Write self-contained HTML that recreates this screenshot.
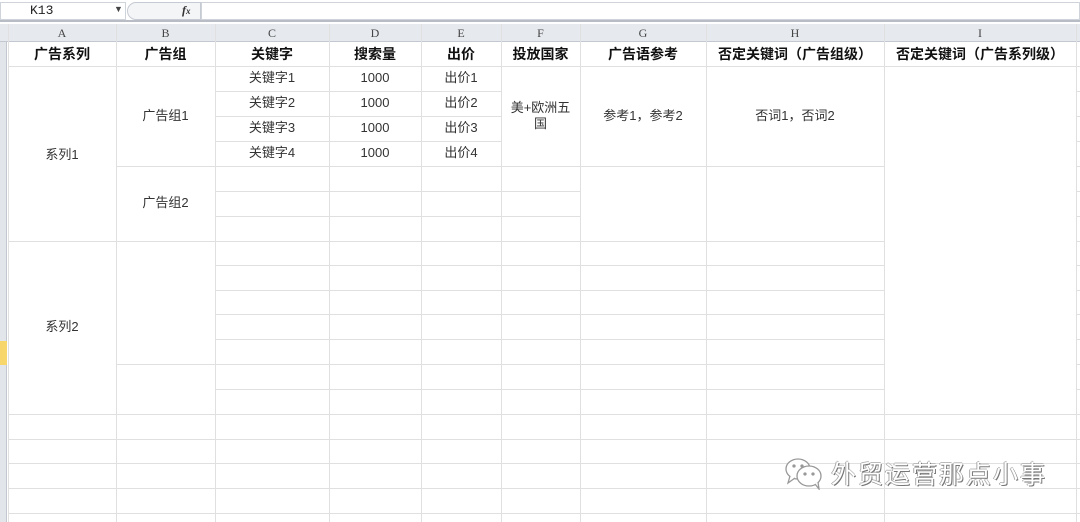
<!DOCTYPE html>
<html><head><meta charset="utf-8"><style>
body{margin:0;width:1080px;height:522px;overflow:hidden;background:#fff;position:relative;font-family:"Liberation Sans","Noto Sans CJK SC",sans-serif;}
div{position:absolute;box-sizing:border-box;}
.t{font-size:13px;color:#333;text-align:center;white-space:nowrap;line-height:16px;}
.b{font-weight:bold;font-size:14px;color:#111;}
.ch{top:25px;height:17px;font-family:"Liberation Serif",serif;font-size:12px;color:#444;text-align:center;line-height:17px;}
</style></head><body>
<div style="left:0;top:0;width:1080px;height:22px;background:#fff;border-bottom:2px solid #b8bcc4;"></div>
<div style="left:0;top:2px;width:126px;height:18px;border:1px solid #cfd3da;background:#fff;"></div>
<div style="left:30px;top:3px;font-family:'Liberation Mono',monospace;font-size:13px;color:#222;">K13</div>
<div style="left:114px;top:4px;font-size:9px;color:#444;">▼</div>
<div style="left:127px;top:2px;width:74px;height:18px;border:1px solid #c6cad2;border-radius:9px 0 0 9px;background:#f4f5f7;"></div>
<div style="left:182px;top:3px;font-family:'Liberation Serif',serif;font-style:italic;font-weight:bold;font-size:12px;color:#333;">f<span style="font-size:9px">x</span></div>
<div style="left:201px;top:2px;width:879px;height:18px;border:1px solid #cfd3da;background:#fff;"></div>
<div style="left:0;top:24px;width:1080px;height:18px;background:#e6e9ee;border-bottom:1px solid #c3c7cf;"></div>
<div style="left:0;top:42px;width:7px;height:480px;background:#e2e5ea;border-right:1px solid #c3c7cf;"></div>
<div style="left:0;top:341px;width:7px;height:24px;background:#f7d66c;"></div>
<div id="g"></div>
<div class="ch" style="left:8px;width:108px">A</div>
<div class="ch" style="left:116px;width:99px">B</div>
<div class="ch" style="left:215px;width:114px">C</div>
<div class="ch" style="left:329px;width:92px">D</div>
<div class="ch" style="left:421px;width:80px">E</div>
<div class="ch" style="left:501px;width:79px">F</div>
<div class="ch" style="left:580px;width:126px">G</div>
<div class="ch" style="left:706px;width:178px">H</div>
<div class="ch" style="left:884px;width:192px">I</div>
<div class="t b" style="left:8px;width:108px;top:46px">广告系列</div>
<div class="t b" style="left:116px;width:99px;top:46px">广告组</div>
<div class="t b" style="left:215px;width:114px;top:46px">关键字</div>
<div class="t b" style="left:329px;width:92px;top:46px">搜索量</div>
<div class="t b" style="left:421px;width:80px;top:46px">出价</div>
<div class="t b" style="left:501px;width:79px;top:46px">投放国家</div>
<div class="t b" style="left:580px;width:126px;top:46px">广告语参考</div>
<div class="t b" style="left:706px;width:178px;top:46px">否定关键词（广告组级）</div>
<div class="t b" style="left:884px;width:192px;top:46px">否定关键词（广告系列级）</div>
<div class="t" style="left:8px;width:108px;top:147px">系列1</div>
<div class="t" style="left:8px;width:108px;top:319px">系列2</div>
<div class="t" style="left:116px;width:99px;top:108px">广告组1</div>
<div class="t" style="left:116px;width:99px;top:195px">广告组2</div>
<div class="t" style="left:215px;width:114px;top:70px">关键字1</div>
<div class="t" style="left:215px;width:114px;top:95px">关键字2</div>
<div class="t" style="left:215px;width:114px;top:120px">关键字3</div>
<div class="t" style="left:215px;width:114px;top:145px">关键字4</div>
<div class="t" style="left:329px;width:92px;top:70px">1000</div>
<div class="t" style="left:329px;width:92px;top:95px">1000</div>
<div class="t" style="left:329px;width:92px;top:120px">1000</div>
<div class="t" style="left:329px;width:92px;top:145px">1000</div>
<div class="t" style="left:421px;width:80px;top:70px">出价1</div>
<div class="t" style="left:421px;width:80px;top:95px">出价2</div>
<div class="t" style="left:421px;width:80px;top:120px">出价3</div>
<div class="t" style="left:421px;width:80px;top:145px">出价4</div>
<div class="t" style="left:501px;width:79px;top:100px">美+欧洲五<br>国</div>
<div class="t" style="left:580px;width:126px;top:108px">参考1，参考2</div>
<div class="t" style="left:706px;width:178px;top:108px">否词1，否词2</div>
<div style="left:784px;top:456px;width:40px;height:34px;">
<svg width="40" height="34" viewBox="0 0 40 34" fill="#fff" stroke="#999" stroke-width="1.3"><ellipse cx="14" cy="13" rx="12" ry="10"/><path d="M6 20 L4 27 L11 22"/><ellipse cx="25" cy="20" rx="12" ry="10"/><path d="M31 28 L35 33 L34 26"/><circle cx="10" cy="10" r="1" fill="#999"/><circle cx="18" cy="10" r="1" fill="#999"/><circle cx="21" cy="18" r="1" fill="#999"/><circle cx="29" cy="18" r="1" fill="#999"/></svg></div>
<div style="left:831px;top:458px;font-family:'Noto Sans CJK SC',sans-serif;font-size:25px;color:#fff;letter-spacing:2px;text-shadow:1px 1px 0 #777,-1px 0 0 #aaa,0 -1px 0 #bbb;line-height:30px;">外贸运营那点小事</div>
<script>
var g=document.getElementById('g');
function L(x,y,w,h){var d=document.createElement('div');d.style.cssText='left:'+x+'px;top:'+y+'px;width:'+w+'px;height:'+h+'px;background:#e0e0e0';document.body.insertBefore(d,g);}
var xs=[8,116,215,329,421,501,580,706,884,1076,1080];
var ys=[66,91,116,141,166,191,216,241,265,290,314,339,364,389,414,439,463,488,513];
L(8,66,1072,1);
var spans={0:[66,241,414],1:[66,166,241,364,414],5:[66,166,191,216,241,265,290,314,339,364,389,414],6:[66,166,241,265,290,314,339,364,389,414],7:[66,166,241,265,290,314,339,364,389,414],8:[66,414],9:ys};
for(var c=0;c<10;c++){var s=spans[c]||ys;var x=xs[c],w=xs[c+1]-xs[c];
 for(var i=0;i<ys.length;i++){var y=ys[i];if(y>=414||s.indexOf(y)>=0)L(x,y,w,1);}}
for(var j=0;j<xs.length-1;j++){L(xs[j],24,1,498);}
</script>
</body></html>
